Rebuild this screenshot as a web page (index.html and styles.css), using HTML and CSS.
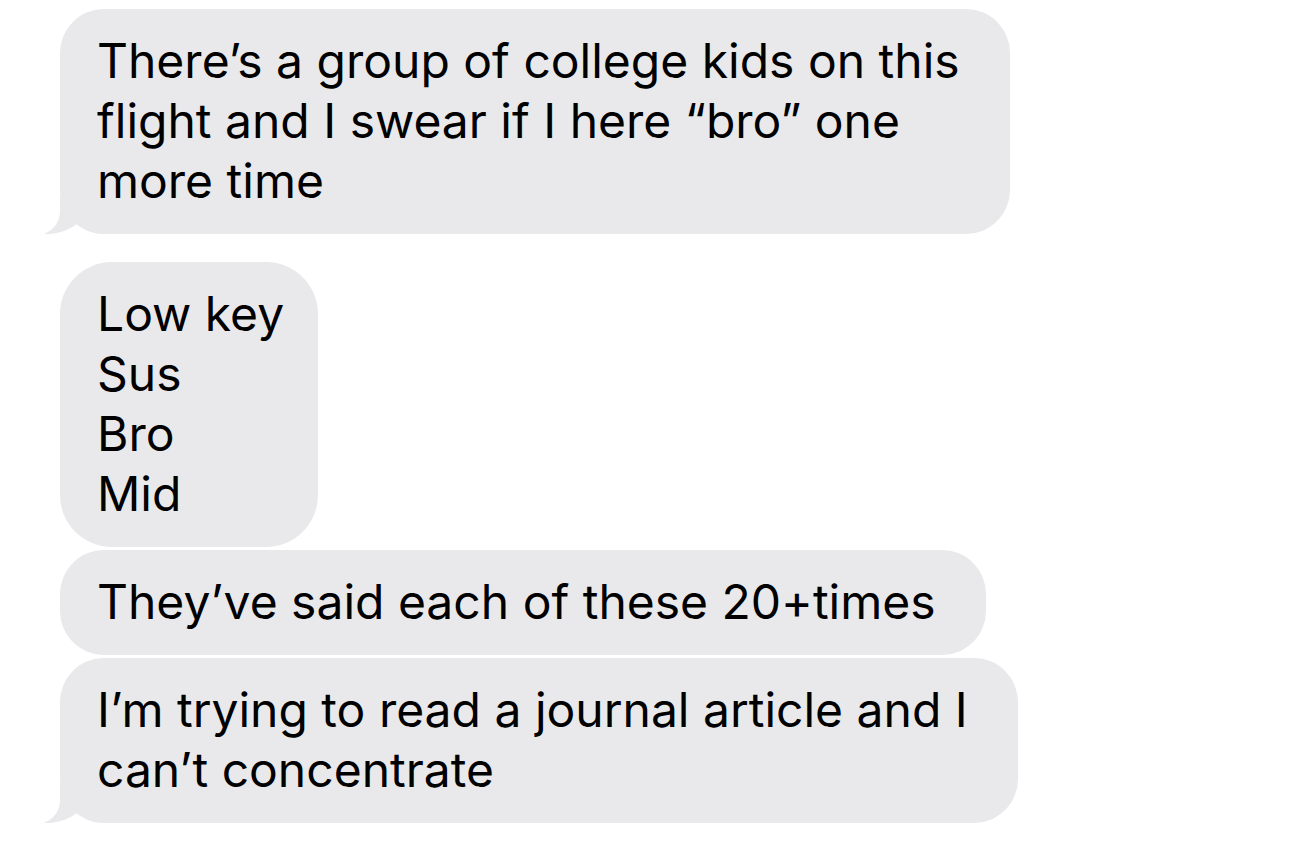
FILE: index.html
```html
<!DOCTYPE html>
<html lang="en">
<head>
    <meta charset="UTF-8">
    <meta name="viewport" content="width=device-width, initial-scale=1.0">
    <title>Messages</title>
    <link rel="stylesheet" href="styles.css">
</head>
<body>
    <div class="thread">
        <div class="bubble tail">
            <svg class="tail-shape" width="60" height="40" viewBox="0 0 60 40"><path d="M16 0 L16 17 C16 29 9 36 0 40 C11 40.5 24 37.5 34 29 C42 36.5 50 40 60 40 L60 0 Z"/></svg>
            <p>There’s a group of college kids on this<br>flight and I swear if I here “bro” one<br>more time</p>
        </div>

        <div class="bubble group-start">
            <p>Low key<br>Sus<br>Bro<br>Mid</p>
        </div>

        <div class="bubble">
            <p>They’ve said each of these 20+times</p>
        </div>

        <div class="bubble tail">
            <svg class="tail-shape" width="60" height="40" viewBox="0 0 60 40"><path d="M16 0 L16 17 C16 29 9 36 0 40 C11 40.5 24 37.5 34 29 C42 36.5 50 40 60 40 L60 0 Z"/></svg>
            <p>I’m trying to read a journal article and I<br>can’t concentrate</p>
        </div>
    </div>
</body>
</html>
```

FILE: styles.css
```css
/* 全局样式 */
body {
    margin: 0;
    padding: 0;
    background: #fff;
    font-family: Inter, "Liberation Sans", sans-serif;
    color: #000;
}

/* 消息列表 */
.thread {
    display: flex;
    flex-direction: column;
    align-items: flex-start;
    gap: 3px;
    padding: 9px 0 0 60px;
}

/* 气泡 */
.bubble {
    position: relative;
    background-color: #e9e9eb;
    border-radius: 44px;
    padding: 22px 50px 23px 37px;
}

.bubble p {
    position: relative; /* 文字压在尾巴上面 */
    margin: 0;
    font-size: 48px;
    line-height: 60px;
    white-space: nowrap;
}

/* 新的一组消息，上方留空 */
.bubble.group-start {
    margin-top: 25px;
    border-radius: 52px;
    padding-right: 34px;
}

/* 左下角小尾巴 */
.tail-shape {
    position: absolute;
    left: -16px;
    bottom: 0;
    fill: #e9e9eb;
}
```
